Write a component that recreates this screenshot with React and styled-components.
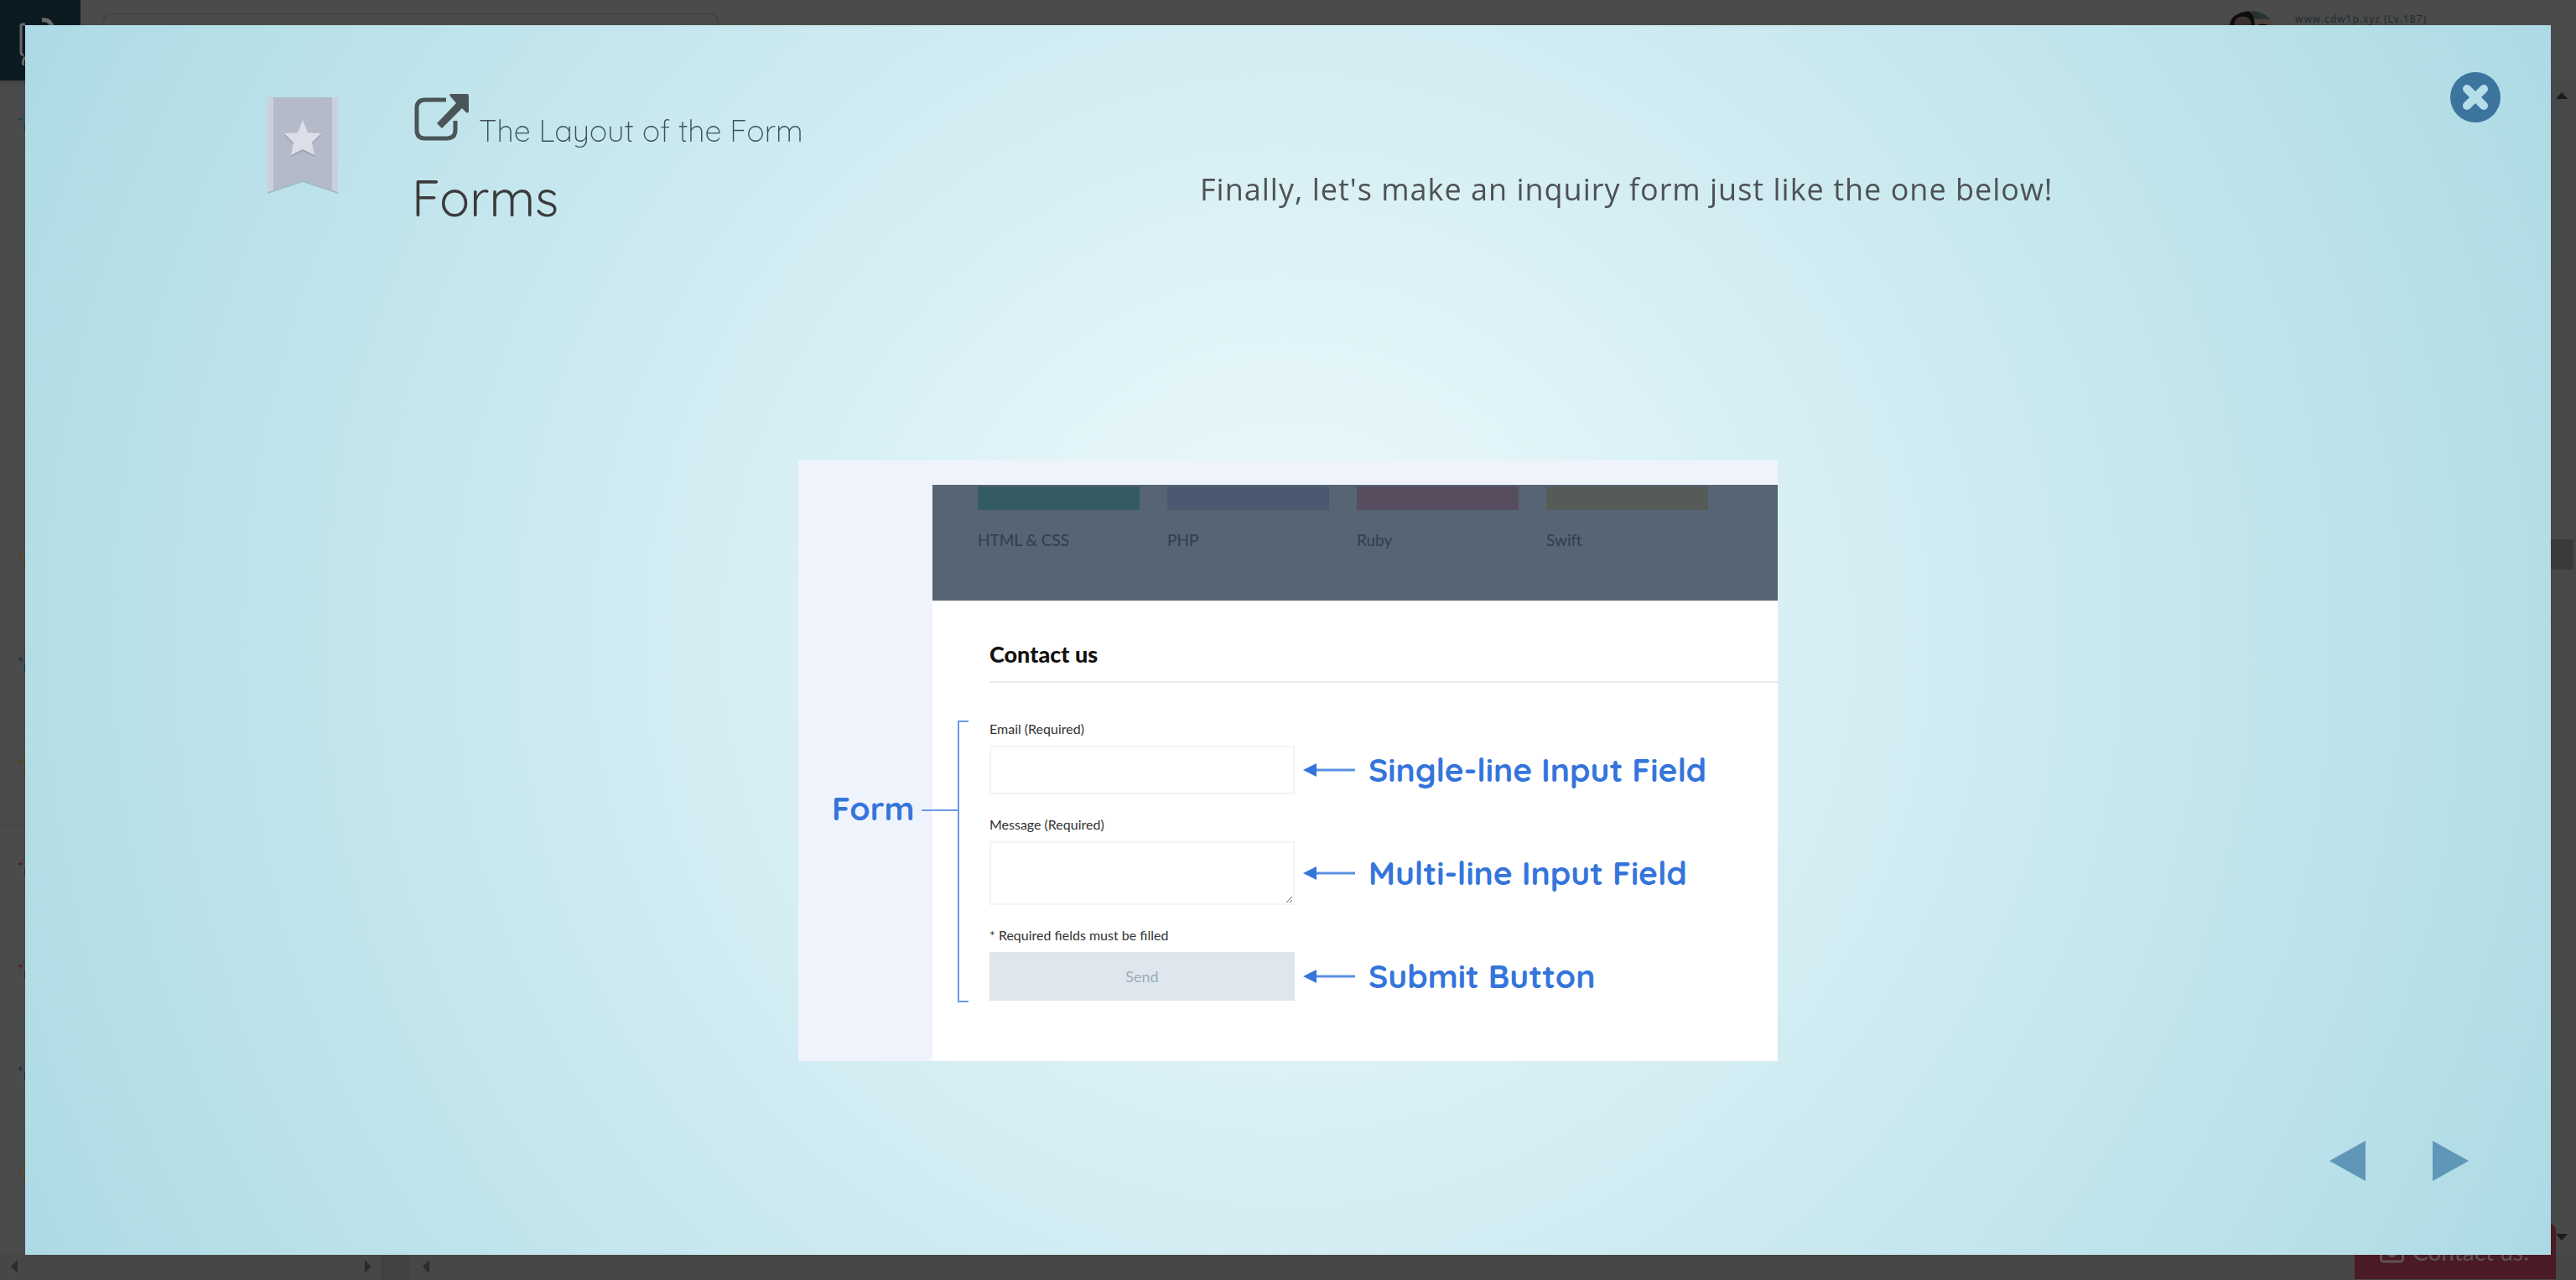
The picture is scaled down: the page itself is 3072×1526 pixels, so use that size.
import React from "react";
import styled, { createGlobalStyle } from "styled-components";

const sans = `"Open Sans", "Noto Sans", sans-serif`;
const title = `Quicksand, Lato, sans-serif`;
const marker = `"Chalkboard SE", Quicksand, "Open Sans", sans-serif`;
const lato = `Lato, "Open Sans", sans-serif`;

const GlobalStyle = createGlobalStyle`
  *, *::before, *::after { box-sizing: border-box; }
  body { margin: 0; background: #4b4b4b; font-family: ${sans}; }
  button { border: 0; padding: 0; background: none; font: inherit; cursor: pointer; }
  h1, h2, p, figure, ul { margin: 0; padding: 0; font-weight: 400; }
  svg { display: block; flex: none; }
`;

const Page = styled.div`
  display: flex;
  flex-direction: column;
  height: 100vh;
  overflow: hidden;
`;

const TopBar = styled.header`
  display: flex;
  height: 96px;
  flex: none;
  box-shadow: 0 2px 6px rgba(0, 0, 0, 0.15);
`;

const Brand = styled.a`
  width: 96px;
  background: #0c1a21;
`;

const Search = styled.input`
  width: 735px;
  height: 64px;
  margin: 16px 0 0 26px;
  border: 2px solid #434343;
  border-radius: 10px;
  background: transparent;
`;

const Account = styled.div`
  display: flex;
  gap: 20px;
  margin-left: auto;
  padding: 13px 178px 0 0;
`;

const UserName = styled.span`
  padding-top: 2px;
  font: 12px/16px ${sans};
  letter-spacing: 1px;
  color: #1c292f;
`;

const Body = styled.div`
  display: flex;
  flex: 1;
  min-height: 0;
`;

const Lessons = styled.ul`
  flex: 1;
  list-style: none;
  overflow: hidden;
`;

const Lesson = styled.li`
  height: ${(p) => (p.$tall ? 522 : 122)}px;
  padding: 40px 0 0 20px;
  border-bottom: 1px solid #464646;
`;

const ScrollTrack = styled.div`
  display: flex;
  flex-direction: column;
  align-items: center;
  justify-content: space-between;
  width: 34px;
  padding: 14px 0;
  background: #484848;
`;

const Thumb = styled.div`
  width: 28px;
  height: 36px;
  margin-bottom: 268px;
  background: #3a3a3a;
`;

const BottomTrack = styled.div`
  display: flex;
  align-items: center;
  height: 33px;
  padding: 0 13px;
  background: #474747;
`;

const TrackSpace = styled.span`
  width: 414px;
`;

const TrackCorner = styled.span`
  width: 34px;
  height: 100%;
  margin: 0 16px 0 11px;
  background: #424242;
`;

const ContactTab = styled.button`
  position: fixed;
  right: 24px;
  bottom: 1px;
  display: flex;
  align-items: center;
  gap: 10px;
  width: 240px;
  height: 66px;
  padding: 0 30px;
  border-radius: 8px 8px 0 0;
  background: #4c1a24;
  color: #5e5356;
  font: 28px/36px ${lato};
  white-space: nowrap;
`;

const Modal = styled.section`
  position: fixed;
  inset: 30px;
  display: flex;
  flex-direction: column;
  background: radial-gradient(circle, #effbfe, #b0dce5 96%, #add8e6);
`;

const ModalHead = styled.header`
  display: grid;
  grid-template-columns: 172px 940px 1fr auto;
  align-items: start;
  height: 519px;
  flex: none;
  padding: 56px 60px 0 289px;
`;

const Bookmark = styled.button`
  width: 84px;
  padding-top: 30px;
`;

const Headings = styled.div`
  padding-top: 26px;
`;

const Chapter = styled.p`
  display: flex;
  align-items: flex-start;
  gap: 12px;
  height: 84px;
  font: 300 36px/48px ${title};
  color: #3f5056;
`;

const ChapterText = styled.span`
  padding-top: 20px;
`;

const LessonTitle = styled.h1`
  font: 400 60px/80px ${title};
  color: #3b3b3b;
`;

const Lead = styled.p`
  padding-top: 114px;
  font: 36px/52px ${sans};
  letter-spacing: 1px;
  color: #4e5256;
`;

const Diagram = styled.figure`
  position: relative;
  align-self: center;
  display: grid;
  grid-template-columns: 160px 1008px;
  height: 716px;
  flex: none;
  padding-top: 29px;
  background: #eff4fc;
`;

const Note = styled.span`
  margin-left: 6px;
  font: 700 39px/44px ${marker};
  color: #3575db;
  white-space: nowrap;
`;

const FormNote = styled(Note)`
  padding: 364px 0 0 34px;
`;

const Sheet = styled.div`
  background: #fff;
`;

const Courses = styled.div`
  display: flex;
  gap: 33px;
  height: 138px;
  padding: 2px 0 0 54px;
  background: #566473;
`;

const Course = styled.div`
  width: 193px;
  padding-top: 22px;
  border-top: 28px solid ${(p) => p.$color};
  font: 19px/28px ${lato};
  color: #2f3e4d;
`;

const ContactForm = styled.form`
  padding: 48px 0 0 68px;
`;

const FormTitle = styled.h2`
  height: 50px;
  margin-bottom: 43px;
  border-bottom: 2px solid #e6ebf0;
  font: 900 27px/32px ${lato};
  color: #111;
`;

const Label = styled.label`
  display: block;
  font: 16px/24px ${lato};
  color: #333;
`;

const Hint = styled(Label).attrs({ as: "p" })``;

const Row = styled.div`
  display: flex;
  align-items: center;
  gap: 10px;
  height: ${(p) => p.$height}px;
  margin: 8px 0 24px;
`;

const Field = styled.input`
  width: 364px;
  height: 100%;
  border: 2px solid #f2f5f7;
  background: #fff;
`;

const Area = styled.textarea`
  width: 364px;
  height: 100%;
  border: 2px solid #f2f5f7;
  background: #fff;
  resize: vertical;
`;

const Send = styled.button`
  && {
    width: 364px;
    height: 100%;
    background: #dfe6ed;
    color: #98adb8;
    font: 18px/24px ${lato};
  }
`;

const Bracket = styled.svg`
  position: absolute;
  left: 147px;
  top: 310px;
`;

const Pager = styled.nav`
  display: flex;
  justify-content: flex-end;
  gap: 80px;
  margin-top: auto;
  padding: 0 98px 88px;
`;

function Triangle({ dir, w, h, color }) {
  const shapes = {
    left: `${w},0 ${w},${h} 0,${h / 2}`,
    right: `0,0 ${w},${h / 2} 0,${h}`,
    up: `0,${h} ${w / 2},0 ${w},${h}`,
    down: `0,0 ${w},0 ${w / 2},${h}`,
  };
  return (
    <svg width={w} height={h} aria-hidden="true">
      <polygon points={shapes[dir]} fill={color} />
    </svg>
  );
}

function Arrow() {
  return (
    <svg width="62" height="16" aria-hidden="true">
      <path d="M14 8H62" stroke="#5b8fe2" strokeWidth="3" />
      <path d="M0 8L16 0V16Z" fill="#3575db" />
    </svg>
  );
}

const marks = ["#1d4a40", "#54451a", "#28304f", "#54451a", "#542027", "#542027", "#28304f", "#54451a"];

const courses = [
  ["HTML & CSS", "#345b62"],
  ["PHP", "#4a5970"],
  ["Ruby", "#574d5f"],
  ["Swift", "#565b58"],
];

export default function App() {
  return (
    <>
      <GlobalStyle />
      <Page>
        <TopBar>
          <Brand href="#" aria-label="Home">
            <svg width="96" height="96" fill="none" stroke="#68696b" strokeWidth="3">
              <path d="M30 29H26Q25 29 25 32V62Q25 65 28 66M30 68Q26 72 28 78" />
              <path d="M50 24Q60 22 63 34" strokeWidth="5" />
            </svg>
          </Brand>
          <Search aria-label="Search" />
          <Account>
            <svg width="66" height="66" viewBox="0 0 66 66" aria-hidden="true">
              <clipPath id="face"><circle cx="33" cy="33" r="33" /></clipPath>
              <g clipPath="url(#face)">
                <path fill="#4f4340" d="M0 0H66V66H0Z" />
                <path fill="#26332f" d="M34 0H66V10H36Z" />
                <path fill="#3a3130" d="M10 18Q18 4 32 8L37 20H10Z" />
                <path fill="#100d0d" d="M8 22Q8 0 28 0Q38 0 38 20H34Q34 5 22 7Q14 7 12 22Z" />
                <path fill="#100d0d" d="M36 20Q50 10 60 22Z" />
              </g>
            </svg>
            <UserName>www.cdw1p.xyz (Lv.187)</UserName>
          </Account>
        </TopBar>
        <Body>
          <Lessons>
            {marks.map((color, i) => (
              <Lesson key={i} $tall={i === 0}>
                <svg width="12" height="24" fill={color} aria-hidden="true">
                  <path d="M2 5H7V7H2ZM4 3H5V9H4ZM8 0H9V2H8ZM9 11H10V20H9Z" />
                </svg>
              </Lesson>
            ))}
          </Lessons>
          <ScrollTrack>
            <Triangle dir="up" w={14} h={8} color="#1c1c1c" />
            <Thumb />
            <Triangle dir="down" w={14} h={8} color="#1c1c1c" />
          </ScrollTrack>
        </Body>
        <BottomTrack>
          <Triangle dir="left" w={8} h={16} color="#2c2c2c" />
          <TrackSpace />
          <Triangle dir="right" w={8} h={16} color="#2c2c2c" />
          <TrackCorner />
          <Triangle dir="left" w={8} h={16} color="#2c2c2c" />
        </BottomTrack>
      </Page>
      <ContactTab>
        <svg width="29" height="28" fill="none" stroke="currentColor" strokeWidth="3" aria-hidden="true">
          <rect x="1.5" y="2" width="26" height="24" rx="3" />
          <path d="M2 10L11 18Q14.500 21 18 18L27 10" />
        </svg>
        Contact us!
      </ContactTab>

      <Modal role="dialog" aria-label="Forms">
        <ModalHead>
          <Bookmark aria-label="Bookmark">
            <svg width="84" height="116" viewBox="0 0 84 116">
              <path d="M0 2L0 115L42 101L84 115V2Z" fill="#9fbac6" />
              <path d="M0 0V113L42 99L84 113V0Z" fill="#ccd0dc" />
              <path d="M7 0V111L42 99L77 111V0Z" fill="#b4bac8" />
              <path d="M42 30L48 44L64 45L53 56L56 71L42 64L28 71L31 56L20 45L36 44Z" fill="#9aa0b0" />
              <path d="M42 27L48 42L64 43L53 54L56 69L42 62L28 69L31 54L20 43L36 42Z" fill="#dcdfe8" />
            </svg>
          </Bookmark>
          <Headings>
            <Chapter>
              <svg width="68" height="58" viewBox="0 0 68 58" aria-hidden="true">
                <path d="M41 7H16Q6 7 6 17V43Q6 53 16 53H42Q52 53 52 43V32" fill="none" stroke="#4a5557" strokeWidth="5" />
                <path d="M46 0H66Q68 0 68 2V21Q67 24 65 22L60 17L36 41L30 35L53 11L47 4Q44 1 46 0Z" fill="#4a5557" />
              </svg>
              <ChapterText>The Layout of the Form</ChapterText>
            </Chapter>
            <LessonTitle>Forms</LessonTitle>
          </Headings>
          <Lead>Finally, let's make an inquiry form just like the one below!</Lead>
          <button aria-label="Close">
            <svg width="60" height="60" viewBox="0 0 60 60">
              <circle cx="30" cy="30" r="30" fill="#3c749e" />
              <path d="M20 20L40 40M40 20L20 40" stroke="#b6dee8" strokeWidth="10" strokeLinecap="round" />
            </svg>
          </button>
        </ModalHead>

        <Diagram>
          <FormNote>Form</FormNote>
          <Sheet>
            <Courses>
              {courses.map(([name, color]) => (
                <Course key={name} $color={color}>{name}</Course>
              ))}
            </Courses>
            <ContactForm onSubmit={(e) => e.preventDefault()}>
              <FormTitle>Contact us</FormTitle>
              <Label htmlFor="email">Email (Required)</Label>
              <Row $height={58}>
                <Field id="email" type="email" />
                <Arrow />
                <Note>Single-line Input Field</Note>
              </Row>
              <Label htmlFor="message">Message (Required)</Label>
              <Row $height={76}>
                <Area id="message" />
                <Arrow />
                <Note>Multi-line Input Field</Note>
              </Row>
              <Hint>* Required fields must be filled</Hint>
              <Row $height={58}>
                <Send type="submit">Send</Send>
                <Arrow />
                <Note>Submit Button</Note>
              </Row>
            </ContactForm>
          </Sheet>
          <Bracket width="56" height="336" fill="none" stroke="#6a9ae6" strokeWidth="2">
            <path d="M56 1H44V335H56M0 107H44" />
          </Bracket>
        </Diagram>

        <Pager aria-label="Slides">
          <button aria-label="Previous"><Triangle dir="left" w={43} h={48} color="#6096b7" /></button>
          <button aria-label="Next"><Triangle dir="right" w={43} h={48} color="#6096b7" /></button>
        </Pager>
      </Modal>
    </>
  );
}
